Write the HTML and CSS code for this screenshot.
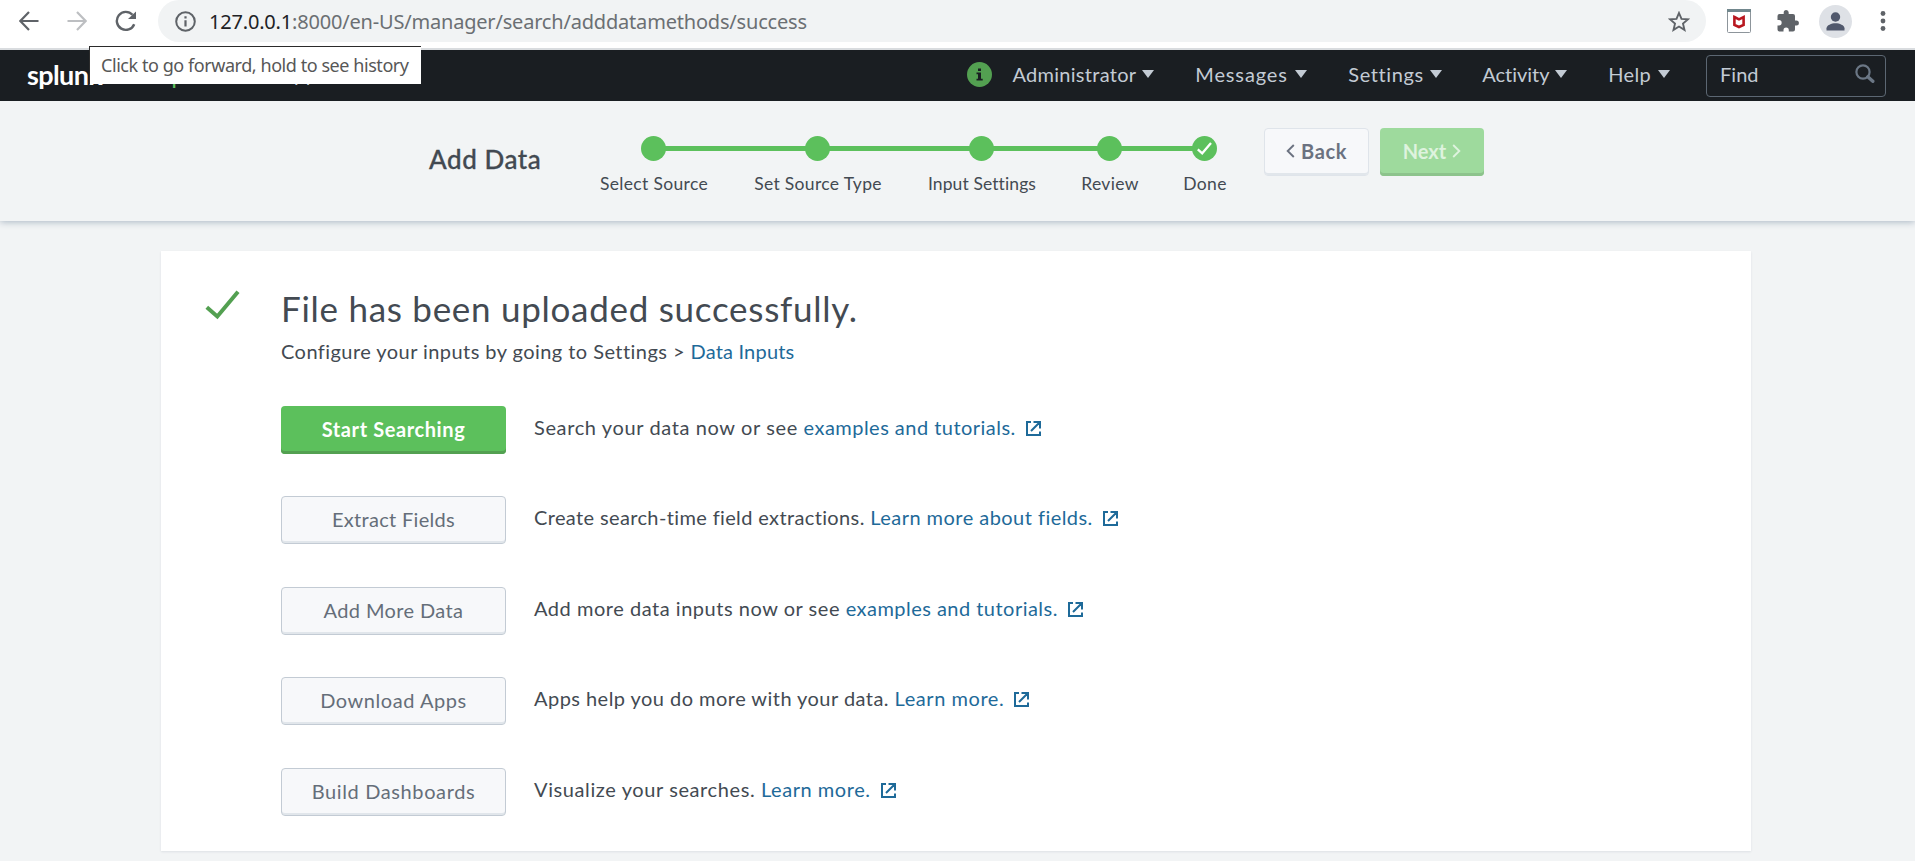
FILE: index.html
```html
<!DOCTYPE html>
<html lang="en">
<head>
<meta charset="utf-8">
<title>Add Data | Splunk</title>
<link rel="stylesheet" href="styles.css">
</head>
<body>
<svg class="defs" aria-hidden="true">
  <symbol id="ext" viewBox="0 0 15 15"><path d="M5 1H1v13h13v-3.500M7.500 1H14v6.500M13.500 1.500L5 10" fill="none" stroke="currentColor" stroke-width="2"/></symbol>
</svg>
<div class="browser">
  <div class="tools">
    <svg width="20" height="20" viewBox="0 0 20 20"><path d="M19.500 10H2M10 1L1.300 10l8.700 9" fill="none" stroke="#5f6368" stroke-width="2.200"/></svg>
    <svg width="20" height="20" viewBox="0 0 20 20"><path d="M.5 10H18M10 1l8.700 9-8.700 9" fill="none" stroke="#bdbfc2" stroke-width="2.200"/></svg>
    <svg width="22" height="22" viewBox="0 0 22 22"><path d="M19.200 14.200A9 9 0 1 1 17.500 4.800" fill="none" stroke="#5f6368" stroke-width="2.400"/><path d="M21 1.500V9h-8z" fill="#5f6368"/></svg>
  </div>
  <div class="omnibox">
    <svg width="21" height="21" viewBox="0 0 21 21"><circle cx="10.500" cy="10.500" r="9.300" fill="none" stroke="#5f6368" stroke-width="2"/><path d="M9.400 9.200h2.200v6.300H9.400zM9.400 5.300h2.200v2.300H9.400z" fill="#5f6368"/></svg>
    <div class="url"><span class="host">127.0.0.1</span>:8000/en-US/manager/search/adddatamethods/success</div>
    <svg width="22" height="21" viewBox="0 0 22 21"><path d="M11 2l2.500 5.900 6.300.5-4.800 4.200 1.500 6.300L11 15.500l-5.500 3.400L7 12.600 2.200 8.400l6.300-.5z" fill="none" stroke="#5f6368" stroke-width="1.900"/></svg>
  </div>
  <div class="extensions">
    <svg class="shield" width="24" height="24" viewBox="0 0 24 24"><rect x=".5" y=".5" width="23" height="23" rx="1" fill="#fff" stroke="#8d959b"/><path d="M0 0h24v3H0z" fill="#71878d"/><path d="M7.400 8l4.600 2.300L16.600 8v8L12 18l-4.600-2z" fill="none" stroke="#b8171f" stroke-width="2.600"/></svg>
    <svg class="puzzle" width="22" height="22" viewBox="0 0 22 22"><path d="M19.400 10.500H18V6a2 2 0 0 0-2-2h-4.300V2.500a2.500 2.500 0 0 0-5 0V4H2.500a2 2 0 0 0-2 2v4.100H2a2.600 2.600 0 0 1 0 5.300H.5v4.100a2 2 0 0 0 2 2h4v-1.300a2.600 2.600 0 0 1 5.300 0v1.300H16a2 2 0 0 0 2-2v-4h1.400a2.500 2.500 0 0 0 0-5z" fill="#5f6368"/></svg>
    <svg class="avatar" width="33" height="33" viewBox="0 0 33 33"><circle cx="16.500" cy="16.500" r="16.500" fill="#dee1e6"/><circle cx="16.500" cy="12" r="4.700" fill="#50586c"/><path d="M7.500 25.500v-2.300c0-3 5-5 9-5s9 2 9 5v2.300z" fill="#50586c"/></svg>
    <svg width="6" height="20" viewBox="0 0 6 20"><g fill="#5f6368"><circle cx="3" cy="2.500" r="2.400"/><circle cx="3" cy="10" r="2.400"/><circle cx="3" cy="17.500" r="2.400"/></g></svg>
  </div>
</div>
<div class="appbar">
  <div class="brand">splunk&gt;</div>
  <div class="edition">enterprise</div>
  <div class="app-label">Apps</div>
  <svg class="info" width="25" height="25" viewBox="0 0 25 25"><circle cx="12.500" cy="12.500" r="12.500" fill="#53a051"/><path d="M11 6.500h3v2.600h-3zM9.500 10.500H14v6.300h1.700v1.700H9.500v-1.700H11v-4.600H9.500z" fill="#1a1e22"/></svg>
  <div class="menu m1"><span>Administrator</span><i></i></div>
  <div class="menu m2"><span>Messages</span><i></i></div>
  <div class="menu m3"><span>Settings</span><i></i></div>
  <div class="menu m4"><span>Activity</span><i></i></div>
  <div class="menu m5"><span>Help</span><i></i></div>
  <div class="find"><span>Find</span><svg width="20" height="20" viewBox="0 0 20 20"><circle cx="8" cy="8" r="6.600" fill="none" stroke="#6b7785" stroke-width="2.200"/><path d="M12.800 12.800l5 4.500" stroke="#6b7785" stroke-width="3.400" stroke-linecap="round"/></svg></div>
</div>
<div class="tooltip">Click to go forward, hold to see history</div>
<header class="wizard">
  <h1>Add Data</h1>
  <ol class="steps">
    <li class="s1"><b></b><span>Select Source</span></li>
    <li class="s2"><b></b><span>Set Source Type</span></li>
    <li class="s3"><b></b><span>Input Settings</span></li>
    <li class="s4"><b></b><span>Review</span></li>
    <li class="s5"><b><svg width="17" height="15" viewBox="0 0 17 15"><path d="M1.800 8.300l4.400 4L15 2" fill="none" stroke="#fff" stroke-width="2.300"/></svg></b><span>Done</span></li>
  </ol>
  <button class="btn back"><svg width="9" height="14" viewBox="0 0 9 14"><path d="M7.800 1L1.700 7l6.100 6" fill="none" stroke="currentColor" stroke-width="1.900"/></svg><span>Back</span></button>
  <button class="btn next"><span>Next</span><svg width="9" height="14" viewBox="0 0 9 14"><path d="M1.200 1l6.100 6-6.100 6" fill="none" stroke="currentColor" stroke-width="1.900"/></svg></button>
</header>
<main class="card">
  <svg class="tick" width="36" height="31" viewBox="0 0 36 31"><path d="M1.800 17.300L12.300 26.500 33 1.800" fill="none" stroke="#53a051" stroke-width="4"/></svg>
  <div class="content">
    <h2>File has been uploaded successfully.</h2>
    <p class="sub"><span class="t0">Configure your inputs by going to Settings &gt; </span><a class="l0">Data Inputs</a></p>
    <div class="row"><button class="btn action primary">Start Searching</button><p><span class="t1">Search your data now or see </span><a class="l1">examples and tutorials.</a><svg class="ext"><use href="#ext"/></svg></p></div>
    <div class="row"><button class="btn action b2">Extract Fields</button><p><span class="t2">Create search-time field extractions. </span><a class="l2">Learn more about fields.</a><svg class="ext"><use href="#ext"/></svg></p></div>
    <div class="row"><button class="btn action b3">Add More Data</button><p><span class="t3">Add more data inputs now or see </span><a class="l1">examples and tutorials.</a><svg class="ext"><use href="#ext"/></svg></p></div>
    <div class="row"><button class="btn action b4">Download Apps</button><p><span class="t4">Apps help you do more with your data. </span><a class="l3">Learn more.</a><svg class="ext"><use href="#ext"/></svg></p></div>
    <div class="row"><button class="btn action b5">Build Dashboards</button><p><span class="t5">Visualize your searches. </span><a class="l3">Learn more.</a><svg class="ext"><use href="#ext"/></svg></p></div>
  </div>
</main>
</body>
</html>
```
FILE: styles.css
```css
* { box-sizing: border-box; }
body { margin: 0; height: 861px; overflow: hidden; background: #f2f4f5; font-family: Lato, "Liberation Sans", sans-serif; font-size: 20px; font-variant-ligatures: none; color: #434a52; display: flex; flex-direction: column; }
h1, h2, p, ol { margin: 0; padding: 0; font-weight: 400; }
svg { display: block; flex: none; }
.defs { position: absolute; width: 0; height: 0; }
.browser { height: 50px; flex: none; background: #fff; border-bottom: 2px solid #d9dcdf; display: flex; align-items: flex-start; }
.tools { width: 158px; height: 42px; padding-left: 19px; display: flex; gap: 28px; align-items: center; }
.omnibox { width: 1548px; height: 42px; border-radius: 21px; background: #f1f3f4; display: flex; align-items: center; padding: 0 16px 0 17px; }
.url { flex: 1; margin-left: 13px; font-family: "Noto Sans", sans-serif; font-size: 20px; line-height: 43px; color: #6b6f73; letter-spacing: -.19px; white-space: nowrap; }
.host { color: #202124; }
.extensions { height: 42px; display: flex; align-items: center; padding-left: 21px; }
.puzzle { margin-left: 26px; }
.avatar { margin: 0 28px 0 20px; }
.appbar { height: 51px; flex: none; background: #1a1e22; color: #c3cbd4; display: flex; align-items: center; padding: 0 29px 3px 27px; }
.brand { width: 86px; color: #fff; font-weight: 700; font-size: 27px; letter-spacing: -.6px; white-space: nowrap; }
.edition { width: 167px; color: #5cc05c; font-size: 25px; }
.app-label { width: 688px; letter-spacing: .6px; }
.info { margin-right: 20px; }
.menu { display: flex; align-items: center; justify-content: space-between; }
.menu i { border: 6px solid transparent; border-top: 8px solid #c3cbd4; border-bottom: 0; }
.m1 { width: 142px; margin-right: 41px; letter-spacing: .28px; }
.m2 { width: 112px; margin-right: 41px; letter-spacing: .85px; }
.m3 { width: 94px; margin-right: 40px; letter-spacing: .6px; }
.m4 { width: 85px; margin-right: 41px; }
.m5 { width: 62px; margin-right: 36px; letter-spacing: .4px; }
.find { width: 180px; height: 42px; margin-top: 3px; border: 1px solid #5c6773; border-radius: 4px; padding: 0 10px 3px 13px; display: flex; align-items: center; justify-content: space-between; }
.tooltip { position: absolute; left: 89px; top: 46px; width: 332px; height: 38px; background: #fff; border-top: 1px solid #2b2b2b; border-left: 1px solid #2b2b2b; padding-left: 11px; font: 18px/37px "Noto Sans", sans-serif; letter-spacing: -.44px; color: #575757; white-space: nowrap; }
.wizard { height: 120px; flex: none; position: relative; display: flex; align-items: flex-start; padding-left: 429px; box-shadow: 0 1px 7px #a9b6c3; clip-path: inset(0 0 -12px 0); background: #f2f4f5; }
.wizard h1 { width: 171px; font-size: 26px; line-height: 32px; margin-top: 42px; font-weight: 500; letter-spacing: .55px; -webkit-text-stroke: .3px #3c444d; }
.steps { width: 626px; margin: 35px 38px 0 0; list-style: none; display: flex; gap: 46px; background: linear-gradient(#5cc05c, #5cc05c) 52px 10px / 552px 5px no-repeat; }
.steps li { display: flex; flex-direction: column; align-items: center; white-space: nowrap; }
.steps b { width: 25px; height: 25px; margin-right: 2px; border-radius: 50%; background: #5cc05c; display: flex; align-items: center; justify-content: center; }
.steps span { font-size: 17.500px; line-height: 22px; margin-top: 12px; letter-spacing: .33px; }
.s1 { width: 108px; } .s2 { width: 129px; } .s3 { width: 108px; } .s4 { width: 56px; } .s5 { width: 42px; }
.steps .s3 span { letter-spacing: .1px; }
.btn { font: 20px Lato, sans-serif; font-variant-ligatures: none; height: 48px; border: 1px solid #c3cbd4; border-radius: 4px; background: #f7f8fa; box-shadow: inset 0 -2px #e1e6eb; color: #656e79; padding: 0 0 2px; white-space: nowrap; }
.back, .next { width: 105px; margin-top: 27px; display: flex; align-items: center; justify-content: center; gap: 6px; font-weight: 700; }
.back { margin-right: 11px; border-color: #dfe4ea; color: #6b7280; letter-spacing: .6px; }
.next { width: 104px; border: 0; background: #9eda9d; box-shadow: inset 0 -3px #8dc38c; color: #def3de; }
.card { width: 1590px; height: 600px; flex: none; margin: 30px 0 0 161px; background: #fff; box-shadow: 0 1px 2px #dde1e5; display: flex; padding-left: 44px; }
.tick { margin-top: 39px; }
.content { margin-left: 40px; }
.content h2 { font-size: 35px; line-height: 40px; margin-top: 37px; letter-spacing: .72px; }
.sub { line-height: 28px; margin-top: 9px; height: 41px; }
.content p { white-space: nowrap; }
a { color: #1e6a99; }
.t0 { letter-spacing: .44px; } .l0 { letter-spacing: .2px; }
.t1 { letter-spacing: .62px; } .l1 { letter-spacing: .47px; }
.t2 { letter-spacing: .37px; } .l2 { letter-spacing: .46px; }
.t3 { letter-spacing: .53px; } .l3 { letter-spacing: .55px; }
.t4 { letter-spacing: .46px; }
.t5 { letter-spacing: .6px; }
.row { display: flex; height: 48px; margin-bottom: 42.500px; }
.sub + .row { margin-top: 27.800px; }
.action { width: 225px; margin-right: 28px; }
.primary { border: 0; background: #5cc05c; box-shadow: inset 0 -3px #53a051; color: #fff; font-weight: 700; letter-spacing: .6px; }
.b2 { letter-spacing: .3px; } .b3 { letter-spacing: .38px; } .b4 { letter-spacing: .55px; } .b5 { letter-spacing: .62px; }
.row p { line-height: 43px; }
.ext { display: inline-block; width: 15px; height: 15px; margin-left: 10px; color: #1e6a99; vertical-align: -1px; }
```
